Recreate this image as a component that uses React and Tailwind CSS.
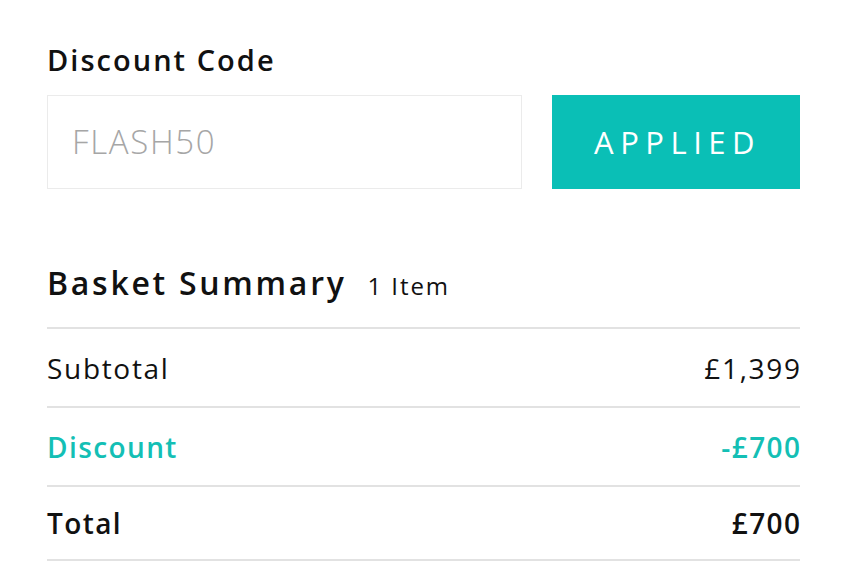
import React from "react";

export default function App() {
  return (
    <div className="w-[856px] h-[568px] bg-white text-[#111] font-['Open_Sans',sans-serif] overflow-hidden">
      <div className="pl-[47px] pr-[56px] pt-[42px]">
        <h2 className="text-[29px] font-semibold leading-[36px] tracking-[0.07em]">Discount Code</h2>
        <div className="mt-[17px] flex gap-[30px] h-[94px]">
          <div className="w-[475px] border border-[#ebebeb] flex items-center pl-[24px] text-[33px] text-[#a6a6a6] font-light tracking-[0.05em]">
            FLASH50
          </div>
          <button className="flex-1 bg-[#0abfb6] text-white text-[31px] flex items-center justify-center">
            <span className="tracking-[0.21em] pl-[0.1em]">APPLIED</span>
          </button>
        </div>
        <div className="mt-[74px] flex items-baseline gap-[21px] h-[40px]">
          <span className="text-[32px] font-semibold leading-[40px] tracking-[0.085em]">Basket Summary</span>
          <span className="text-[24px] leading-[40px] tracking-[0.08em]">1 Item</span>
        </div>
        <div className="mt-[24px] border-b-2 border-[#e2e2e2]">
          <div className="h-[79px] border-t-2 border-[#e2e2e2] flex items-center justify-between text-[28px] tracking-[0.06em]">
            <span>Subtotal</span>
            <span className="mr-[-0.06em]">£1,399</span>
          </div>
          <div className="h-[79px] border-t-2 border-[#e2e2e2] flex items-center justify-between text-[28px] tracking-[0.05em] font-semibold text-[#14bfb5]">
            <span>Discount</span>
            <span className="mr-[-0.05em]">-£700</span>
          </div>
          <div className="h-[74px] border-t-2 border-[#e2e2e2] flex items-center justify-between text-[28px] tracking-[0.05em] font-semibold">
            <span>Total</span>
            <span className="mr-[-0.05em]">£700</span>
          </div>
        </div>
      </div>
    </div>
  );
}
